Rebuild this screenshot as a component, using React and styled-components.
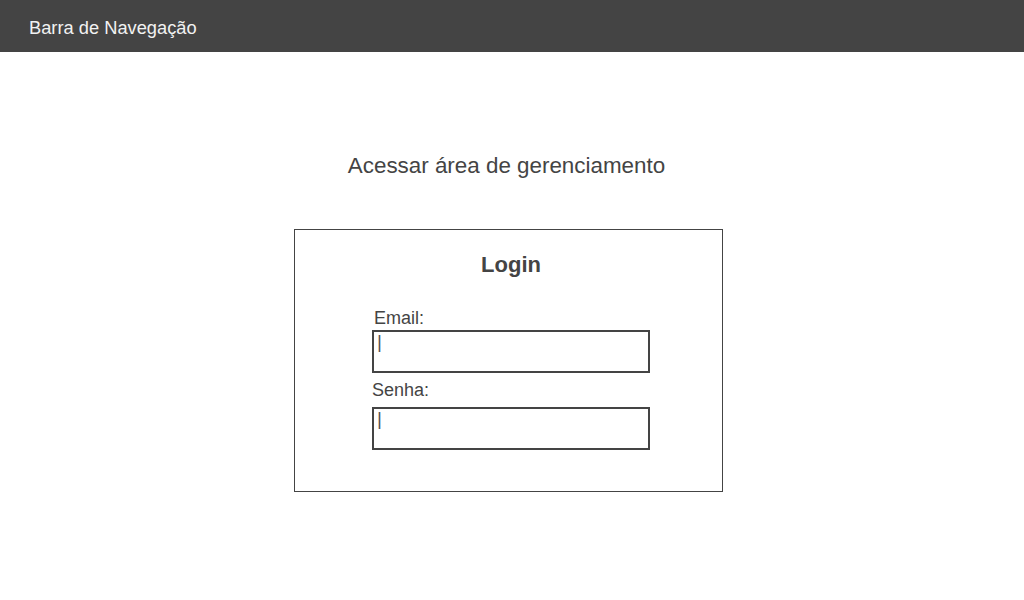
import React from "react";
import styled, { createGlobalStyle } from "styled-components";

const GlobalStyle = createGlobalStyle`
  * { box-sizing: border-box; }
  body {
    margin: 0;
    background: #ffffff;
    font-family: "Liberation Sans", Arial, sans-serif;
    color: #444444;
  }
`;

const NavBar = styled.header`
  height: 52px;
  background: #444444;
  display: flex;
  align-items: center;
  padding: 3px 29px 0;
  span {
    color: #f2f2f2;
    font-size: 18.3px;
  }
`;

const Main = styled.main`
  display: flex;
  flex-direction: column;
  align-items: center;
  padding-top: 101px;
`;

const Title = styled.h2`
  margin: 0 11px 0 0;
  font-size: 22.4px;
  font-weight: normal;
  line-height: 26px;
  color: #444444;
`;

const Card = styled.section`
  margin: 50px 7px 0 0;
  width: 429px;
  height: 263px;
  border: 1px solid #444444;
  padding: 22px 0 0 77px;
`;

const Form = styled.div`
  width: 278px;
  display: flex;
  flex-direction: column;
`;

const CardTitle = styled.h3`
  margin: 0;
  text-align: center;
  font-size: 22px;
  font-weight: bold;
  line-height: 26px;
  color: #444444;
`;

const Label = styled.label`
  font-size: 18px;
  line-height: 22px;
  margin-top: ${(p) => p.$top}px;
  padding-left: ${(p) => p.$indent || 0}px;
  color: #444444;
`;

const Field = styled.div`
  height: 43px;
  border: 2px solid #444444;
  margin-top: ${(p) => p.$top}px;
  padding: 0 0 0 3px;
  font-size: 19px;
  line-height: 19px;
  color: #555555;
`;

export default function App() {
  return (
    <>
      <GlobalStyle />
      <NavBar>
        <span>Barra de Navegação</span>
      </NavBar>
      <Main>
        <Title>Acessar área de gerenciamento</Title>
        <Card>
          <Form>
            <CardTitle>Login</CardTitle>
            <Label $top={29} $indent={2}>Email:</Label>
            <Field $top={1}>|</Field>
            <Label $top={6}>Senha:</Label>
            <Field $top={6}>|</Field>
          </Form>
        </Card>
      </Main>
    </>
  );
}
